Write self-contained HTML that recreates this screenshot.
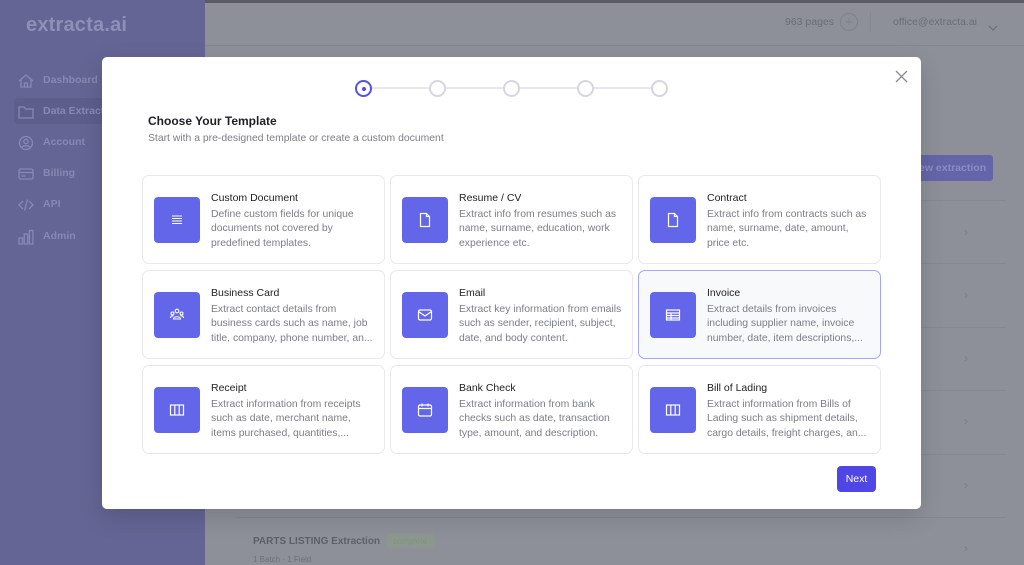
<!DOCTYPE html>
<html><head><meta charset="utf-8"><style>
*{margin:0;padding:0;box-sizing:border-box}
body{width:1024px;height:565px;overflow:hidden;font-family:"Liberation Sans",sans-serif;background:#8e9099;position:relative}
.abs{position:absolute}
.side{left:0;top:0;width:205px;height:565px;background:#646594}
.logo{left:26px;top:14px;font-size:20px;font-weight:bold;color:#8f90b8;letter-spacing:0.2px}
.nav{left:18px;font-size:10.5px;color:#8788b4;font-weight:bold}
.nav span{position:absolute;left:25px;top:0;white-space:nowrap}
.topbar{left:205px;top:0;width:819px;height:3px;background:#5b5c63}
.hline{left:205px;top:45px;width:819px;height:1px;background:#858791}
.row{left:236px;width:770px;height:1px;background:#858791}
.chev{left:964px;color:#7d7f88;font-size:12px}
.modal{left:102px;top:57px;width:819px;height:452px;background:#fff;border-radius:5px;box-shadow:0 8px 24px rgba(0,0,0,.15)}
.card{width:243px;height:89px;border:1px solid #e8e8ee;border-radius:7px;background:#fff}
.card.sel{border-color:#a5a7f5;background:#f8f9fb}
.ic{position:absolute;left:11px;top:21px;width:46px;height:46px;background:#6366e9;border-radius:4px}
.ic svg{position:absolute;left:15px;top:15px}
.ct{position:absolute;left:68px;top:16px;font-size:10.5px;color:#222;font-weight:500}
.cd{position:absolute;left:68px;top:32px;width:164px;font-size:10.4px;line-height:14.3px;color:#7b7e86}
.step{width:17px;height:17px;border-radius:50%;border:2px solid #d6d7de;background:#fff;top:80px}
</style></head><body>
<div class="abs side"></div>
<div class="abs logo">extracta.ai</div>
<div class="abs" style="left:14px;top:98px;width:200px;height:26px;background:#5d5e8c;border-radius:4px"></div>
<div class="abs nav" style="top:73px"><svg width="16" height="16" viewBox="0 0 16 16" fill="none" stroke="#8788b4" stroke-width="1.3"><path d="M1 8L8 2l7 6M3 6.5V14h10V6.5M6.5 14v-4h3v4"/></svg><span style="top:1px">Dashboard</span></div>
<div class="abs nav" style="top:104px"><svg width="16" height="16" viewBox="0 0 16 16" fill="none" stroke="#8788b4" stroke-width="1.3"><path d="M1 3h5l1.5 2H15v9H1z"/></svg><span style="top:1px">Data Extract</span></div>
<div class="abs nav" style="top:135px"><svg width="16" height="16" viewBox="0 0 16 16" fill="none" stroke="#8788b4" stroke-width="1.3"><circle cx="8" cy="8" r="6.5"/><circle cx="8" cy="6.5" r="2.2"/><path d="M3.8 12.5c2-2.4 6.4-2.4 8.4 0"/></svg><span style="top:1px">Account</span></div>
<div class="abs nav" style="top:166px"><svg width="16" height="16" viewBox="0 0 16 16" fill="none" stroke="#8788b4" stroke-width="1.3"><rect x="1" y="3" width="14" height="10" rx="1.5"/><path d="M1 6.5h14M3.5 10h4"/></svg><span style="top:1px">Billing</span></div>
<div class="abs nav" style="top:197px"><svg width="16" height="16" viewBox="0 0 16 16" fill="none" stroke="#8788b4" stroke-width="1.3"><path d="M5 4L1 8l4 4M11 4l4 4-4 4M9.5 2.5l-3 11"/></svg><span style="top:1px">API</span></div>
<div class="abs nav" style="top:229px"><svg width="16" height="16" viewBox="0 0 16 16" fill="none" stroke="#8788b4" stroke-width="1.3"><rect x="1" y="9" width="3.5" height="6"/><rect x="6.2" y="5" width="3.5" height="10"/><rect x="11.4" y="1.5" width="3.5" height="13.5"/></svg><span style="top:1px">Admin</span></div>
<div class="abs topbar"></div>
<div class="abs hline"></div>
<div class="abs" style="left:785px;top:16px;font-size:10.5px;color:#6b6d76">963 pages</div>
<div class="abs" style="left:840px;top:13px;width:18px;height:18px;border:1px solid #7f818b;border-radius:50%;color:#7f818b;font-size:13px;text-align:center;line-height:15px">+</div>
<div class="abs" style="left:870px;top:12px;width:1px;height:20px;background:#858791"></div>
<div class="abs" style="left:893px;top:16px;font-size:10.5px;color:#6b6d76">office@extracta.ai</div>
<div class="abs" style="left:988px;top:19px"><svg width="10" height="7" viewBox="0 0 10 7" fill="none" stroke="#6b6d76" stroke-width="1.2"><path d="M1 1l4 4 4-4"/></svg></div>
<div class="abs" style="left:905px;top:155px;width:88px;height:26px;background:#6365a8;border-radius:3px;color:#8a8cc4;font-size:10.5px;font-weight:bold;line-height:26px;padding-left:14px">ew extraction</div>
<div class="abs row" style="top:200px"></div>
<div class="abs row" style="top:263px"></div>
<div class="abs row" style="top:327px"></div>
<div class="abs row" style="top:390px"></div>
<div class="abs row" style="top:454px"></div>
<div class="abs row" style="top:517px"></div>
<div class="abs chev" style="top:225px">›</div>
<div class="abs chev" style="top:288px">›</div>
<div class="abs chev" style="top:351px">›</div>
<div class="abs chev" style="top:414px">›</div>
<div class="abs chev" style="top:478px">›</div>
<div class="abs chev" style="top:541px">›</div>
<div class="abs" style="left:253px;top:536px;font-size:10px;color:#5e6068;font-weight:bold">PARTS LISTING Extraction</div>
<div class="abs" style="left:386px;top:533px;padding:2px 6px;font-size:8.5px;color:#7c957f;border:1px solid #8a9490;border-radius:4px;background:#8d968f">complete</div>
<div class="abs" style="left:253px;top:555px;font-size:8px;color:#6e7079">1 Batch · 1 Field</div>

<div class="abs modal"></div>
<div class="abs" style="left:893px;top:68px"><svg width="17" height="17" viewBox="0 0 17 17" fill="none" stroke="#8a8c95" stroke-width="1.3"><path d="M3 3l11 11M14 3L3 14"/></svg></div>
<div class="abs" style="left:372px;top:87px;width:288px;height:2px;background:#e6e7ec"></div>
<div class="abs step" style="left:355px;border-color:#5552e0"><div style="position:absolute;left:4.5px;top:4.5px;width:4px;height:4px;background:#4f4ce0;border-radius:50%"></div></div>
<div class="abs step" style="left:429px"></div>
<div class="abs step" style="left:503px"></div>
<div class="abs step" style="left:577px"></div>
<div class="abs step" style="left:651px"></div>
<div class="abs" style="left:148px;top:114px;font-size:12px;font-weight:bold;color:#1f2024">Choose Your Template</div>
<div class="abs" style="left:148px;top:133px;font-size:10.4px;color:#7b7e86">Start with a pre-designed template or create a custom document</div>

<div class="abs card" style="left:142px;top:175px"><div class="ic"><svg width="16" height="16" viewBox="0 0 16 16" stroke="#fff" stroke-width="1.1"><path d="M3 4h10M3 6.5h10M3 9h10M3 11.5h10"/></svg></div><div class="ct">Custom Document</div><div class="cd">Define custom fields for unique documents not covered by predefined templates.</div></div>
<div class="abs card" style="left:390px;top:175px"><div class="ic"><svg width="16" height="16" viewBox="0 0 16 16" fill="none" stroke="#fff" stroke-width="1.2"><path d="M3.5 1.5h6l3 3v10h-9zM9.5 1.5v3h3"/></svg></div><div class="ct">Resume / CV</div><div class="cd">Extract info from resumes such as name, surname, education, work experience etc.</div></div>
<div class="abs card" style="left:638px;top:175px"><div class="ic"><svg width="16" height="16" viewBox="0 0 16 16" fill="none" stroke="#fff" stroke-width="1.2"><path d="M3.5 1.5h6l3 3v10h-9zM9.5 1.5v3h3"/></svg></div><div class="ct">Contract</div><div class="cd">Extract info from contracts such as name, surname, date, amount, price etc.</div></div>

<div class="abs card" style="left:142px;top:270px"><div class="ic"><svg width="16" height="16" viewBox="0 0 16 16" fill="none" stroke="#fff" stroke-width="1.1"><circle cx="8" cy="4" r="1.8"/><circle cx="3.5" cy="6.5" r="1.5"/><circle cx="12.5" cy="6.5" r="1.5"/><path d="M4.5 12c0-3 7-3 7 0zM1.5 11c0-2 2-2.5 3-2M14.5 11c0-2-2-2.5-3-2"/></svg></div><div class="ct">Business Card</div><div class="cd">Extract contact details from business cards such as name, job title, company, phone number, an...</div></div>
<div class="abs card" style="left:390px;top:270px"><div class="ic"><svg width="16" height="16" viewBox="0 0 16 16" fill="none" stroke="#fff" stroke-width="1.2"><rect x="1.5" y="3" width="13" height="10" rx="1.5"/><path d="M1.5 4.5L8 9l6.5-4.5"/></svg></div><div class="ct">Email</div><div class="cd">Extract key information from emails such as sender, recipient, subject, date, and body content.</div></div>
<div class="abs card sel" style="left:638px;top:270px"><div class="ic"><svg width="16" height="16" viewBox="0 0 16 16" fill="none" stroke="#fff" stroke-width="1.2"><rect x="1.5" y="3" width="13" height="10"/><path d="M1.5 6h13M1.5 8.5h13M1.5 11h13M6 6v7"/></svg></div><div class="ct">Invoice</div><div class="cd">Extract details from invoices including supplier name, invoice number, date, item descriptions,...</div></div>

<div class="abs card" style="left:142px;top:365px"><div class="ic"><svg width="16" height="16" viewBox="0 0 16 16" fill="none" stroke="#fff" stroke-width="1.2"><rect x="1.5" y="3" width="13" height="10"/><path d="M5.8 3v10M10.2 3v10"/></svg></div><div class="ct">Receipt</div><div class="cd">Extract information from receipts such as date, merchant name, items purchased, quantities,...</div></div>
<div class="abs card" style="left:390px;top:365px"><div class="ic"><svg width="16" height="16" viewBox="0 0 16 16" fill="none" stroke="#fff" stroke-width="1.2"><rect x="1.5" y="3" width="13" height="11" rx="1.5"/><path d="M1.5 6.5h13M5 1.5v3M11 1.5v3"/></svg></div><div class="ct">Bank Check</div><div class="cd">Extract information from bank checks such as date, transaction type, amount, and description.</div></div>
<div class="abs card" style="left:638px;top:365px"><div class="ic"><svg width="16" height="16" viewBox="0 0 16 16" fill="none" stroke="#fff" stroke-width="1.2"><rect x="1.5" y="3" width="13" height="10"/><path d="M5.8 3v10M10.2 3v10"/></svg></div><div class="ct">Bill of Lading</div><div class="cd">Extract information from Bills of Lading such as shipment details, cargo details, freight charges, an...</div></div>

<div class="abs" style="left:837px;top:466px;width:39px;height:26px;background:#4f46e5;border-radius:4px;color:#fff;font-size:10.5px;font-weight:500;text-align:center;line-height:26px">Next</div>
</body></html>
